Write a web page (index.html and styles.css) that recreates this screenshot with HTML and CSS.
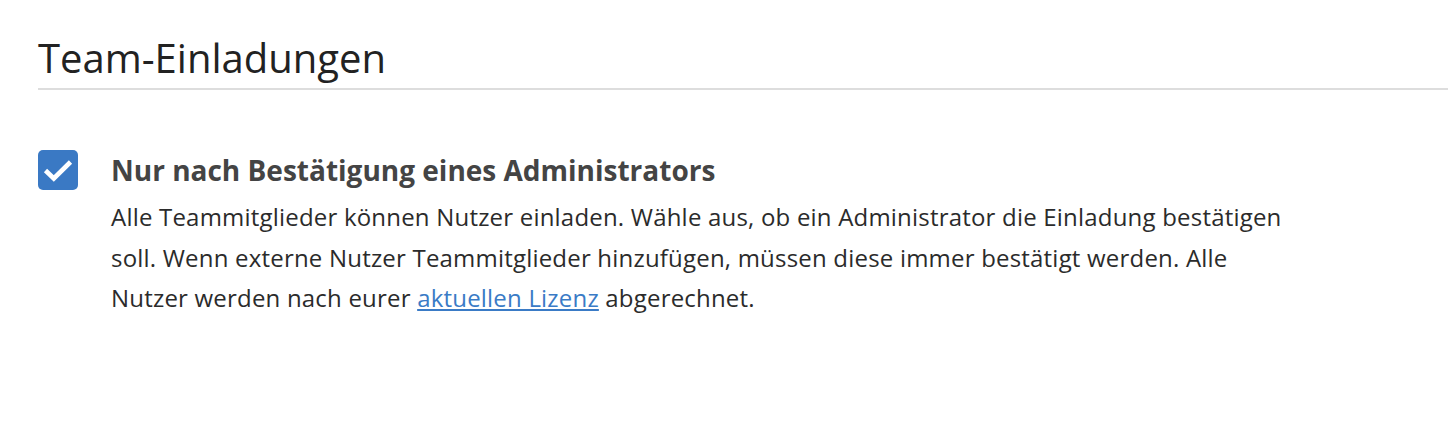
FILE: index.html
```html
<!DOCTYPE html>
<html lang="de">
<head>
<meta charset="utf-8">
<title>Team-Einladungen</title>
<link rel="stylesheet" href="styles.css">
</head>
<body>
<section class="settings">
  <h1 class="section-title">Team-Einladungen</h1>
  <div class="option">
    <span class="checkbox" role="checkbox" aria-checked="true">
      <svg viewBox="0 0 40 40" width="40" height="40" aria-hidden="true">
        <path d="M7.5 20.5 L15.8 28.5 L32.5 12" fill="none" stroke="#fff" stroke-width="4.6" stroke-linecap="butt" stroke-linejoin="miter"/>
      </svg>
    </span>
    <div class="option-body">
      <div class="option-title">Nur nach Bestätigung eines Administrators</div>
      <p class="option-desc">Alle Teammitglieder können Nutzer einladen. Wähle aus, ob ein Administrator die Einladung bestätigen soll. Wenn externe Nutzer Teammitglieder hinzufügen, müssen diese immer bestätigt werden. Alle Nutzer werden nach eurer <a href="#">aktuellen Lizenz</a> abgerechnet.</p>
    </div>
  </div>
</section>
</body>
</html>
```
FILE: styles.css
```css
html, body {
  margin: 0;
  padding: 0;
  background: #fff;
}
body {
  font-family: "Open Sans", "Noto Sans", sans-serif;
  color: #333;
}
.settings {
  padding: 30px 0 0 38px;
}
.section-title {
  margin: 0;
  font-size: 40px;
  font-weight: 400;
  color: #222;
  line-height: 56px;
  padding-bottom: 2px;
  border-bottom: 2px solid #dddddd;
}
.option {
  display: flex;
  gap: 33px;
  margin-top: 60px;
}
.checkbox {
  flex: 0 0 40px;
  width: 40px;
  height: 40px;
  border-radius: 5px;
  background: #3a79c4;
  display: block;
}
.checkbox svg {
  display: block;
}
.option-body {
  width: 1185px;
  padding-top: 1px;
}
.option-title {
  font-size: 28px;
  font-weight: 700;
  color: #444;
  line-height: 38px;
  margin-bottom: 8px;
}
.option-desc {
  margin: 0;
  font-size: 24px;
  letter-spacing: 0.2px;
  line-height: 40.5px;
  color: #2b2b2b;
}
.option-desc a {
  color: #3a7bc6;
  text-decoration: underline;
}
```
